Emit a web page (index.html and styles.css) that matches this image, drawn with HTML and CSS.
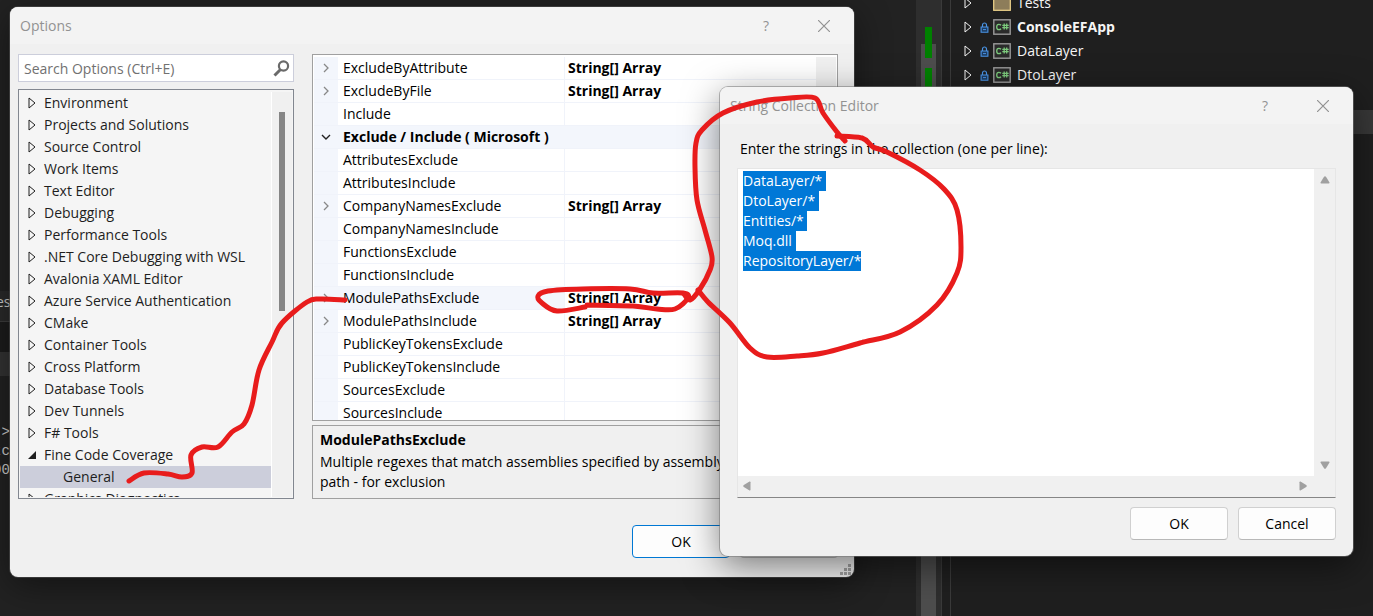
FILE: index.html
```html
<!DOCTYPE html>
<html lang="en">
<head>
<meta charset="utf-8">
<title>Options</title>
<link rel="stylesheet" href="styles.css">
</head>
<body>
<svg class="defs" aria-hidden="true">
  <symbol id="arrow" viewBox="0 0 8 12"><path d="M1 1v10l6-5z" fill="none" stroke="currentColor"/></symbol>
  <symbol id="arrow-open" viewBox="0 0 8 8"><path d="M8 0v8H0z" fill="currentColor"/></symbol>
  <symbol id="chev" viewBox="0 0 8 10"><path d="M2 1l4 4-4 4" fill="none" stroke="#888" stroke-width="1.3"/></symbol>
  <symbol id="chev-open" viewBox="0 0 10 8"><path d="M1 2l4 4 4-4" fill="none" stroke="#222" stroke-width="1.4"/></symbol>
  <symbol id="close" viewBox="0 0 12 12"><path d="M0 0l12 12M12 0L0 12" stroke="currentColor" stroke-width="1.2"/></symbol>
  <symbol id="lock" viewBox="0 0 8 11"><path d="M2 5V3a2 2 0 0 1 4 0v2" fill="none" stroke="#4a94e6" stroke-width="1.2"/><path d="M.6 5h6.800v5.200H.6z" fill="#1d3c60" stroke="#4a94e6" stroke-width="1.1"/><path d="M2.500 7.600h3" stroke="#4a94e6"/></symbol>
  <symbol id="csharp" viewBox="0 0 18 16"><rect x=".8" y=".8" width="16.4" height="14.4" fill="#2b2b2b" stroke="#9a9a9a" stroke-width="1.4"/><path d="M8 6.300C7.300 5.500 6.500 5.300 5.800 5.300 4.500 5.300 3.700 6.500 3.700 8s.8 2.700 2.100 2.700c.7 0 1.500-.2 2.200-1M11.200 4.500v6M13.700 4.500v6M9.300 6.300h6.400M9.300 8.700h6.400" fill="none" stroke="#7cc97c" stroke-width="1.3"/></symbol>
  <symbol id="folder" viewBox="0 0 18 16"><rect x=".7" y=".7" width="16.600" height="14.600" fill="#8d7d5a" stroke="#f0d58c" stroke-width="1.200"/></symbol>
  <symbol id="tri" viewBox="0 0 10 8"><path d="M4 .8Q5-.4 6 .8L9.500 6.500Q9.700 7.500 8.700 7.500H1.300Q.3 7.500.5 6.500z" fill="#a0a0a0"/></symbol>
</svg>

<div class="desktop">
  <div class="editor">
    <div class="tab">es</div>
    <div class="band"></div>
    <div class="band light"></div>
    <pre class="code">-&gt;
tc
00</pre>
  </div>
  <div class="overview"><div class="thumb"><i></i><i></i></div></div>
  <div class="splitter"></div>
  <div class="explorer">
    <ul class="projects">
      <li><svg class="tw"><use href="#arrow"/></svg><span class="lock"></span><svg class="proj"><use href="#folder"/></svg>Tests</li>
      <li class="bold"><svg class="tw"><use href="#arrow"/></svg><svg class="lock"><use href="#lock"/></svg><svg class="proj"><use href="#csharp"/></svg>ConsoleEFApp</li>
      <li><svg class="tw"><use href="#arrow"/></svg><svg class="lock"><use href="#lock"/></svg><svg class="proj"><use href="#csharp"/></svg>DataLayer</li>
      <li><svg class="tw"><use href="#arrow"/></svg><svg class="lock"><use href="#lock"/></svg><svg class="proj"><use href="#csharp"/></svg>DtoLayer</li>
    </ul>
    <div class="picked"></div>
  </div>
</div>

<section class="window options" aria-label="Options">
  <header class="titlebar"><h1>Options</h1><button class="tb" aria-label="Help">?</button><button class="tb" aria-label="Close"><svg><use href="#close"/></svg></button></header>
  <div class="body">
    <div class="columns">
      <div class="side">
        <label class="search"><input type="text" placeholder="Search Options (Ctrl+E)" aria-label="Search Options"><svg viewBox="0 0 17 17"><circle cx="10.500" cy="6" r="4.600" fill="none" stroke="#6a6a6a" stroke-width="2.200"/><path d="M7.500 9.500L1.500 15.500" stroke="#6a6a6a" stroke-width="3"/></svg></label>
        <div class="treebox">
          <ul class="tree">
            <li><svg><use href="#arrow"/></svg>Environment</li>
            <li><svg><use href="#arrow"/></svg>Projects and Solutions</li>
            <li><svg><use href="#arrow"/></svg>Source Control</li>
            <li><svg><use href="#arrow"/></svg>Work Items</li>
            <li><svg><use href="#arrow"/></svg>Text Editor</li>
            <li><svg><use href="#arrow"/></svg>Debugging</li>
            <li><svg><use href="#arrow"/></svg>Performance Tools</li>
            <li><svg><use href="#arrow"/></svg>.NET Core Debugging with WSL</li>
            <li><svg><use href="#arrow"/></svg>Avalonia XAML Editor</li>
            <li><svg><use href="#arrow"/></svg>Azure Service Authentication</li>
            <li><svg><use href="#arrow"/></svg>CMake</li>
            <li><svg><use href="#arrow"/></svg>Container Tools</li>
            <li><svg><use href="#arrow"/></svg>Cross Platform</li>
            <li><svg><use href="#arrow"/></svg>Database Tools</li>
            <li><svg><use href="#arrow"/></svg>Dev Tunnels</li>
            <li><svg><use href="#arrow"/></svg>F# Tools</li>
            <li><svg><use href="#arrow-open"/></svg>Fine Code Coverage</li>
            <li class="child">General</li>
            <li><svg><use href="#arrow"/></svg>Graphics Diagnostics</li>
          </ul>
          <div class="treebar"><div></div></div>
        </div>
      </div>
      <div class="main">
        <div class="gridbox">
          <table class="props">
            <colgroup><col class="c1"><col class="c2"><col></colgroup>
            <tbody>
            <tr><td><svg><use href="#chev"/></svg></td><th>ExcludeByAttribute</th><td>String[] Array</td></tr>
            <tr><td><svg><use href="#chev"/></svg></td><th>ExcludeByFile</th><td>String[] Array</td></tr>
            <tr><td></td><th>Include</th><td></td></tr>
            <tr class="group"><td><svg><use href="#chev-open"/></svg></td><th colspan="2">Exclude / Include ( Microsoft )</th></tr>
            <tr><td></td><th>AttributesExclude</th><td></td></tr>
            <tr><td></td><th>AttributesInclude</th><td></td></tr>
            <tr><td><svg><use href="#chev"/></svg></td><th>CompanyNamesExclude</th><td>String[] Array</td></tr>
            <tr><td></td><th>CompanyNamesInclude</th><td></td></tr>
            <tr><td></td><th>FunctionsExclude</th><td></td></tr>
            <tr><td></td><th>FunctionsInclude</th><td></td></tr>
            <tr class="current"><td><svg><use href="#chev"/></svg></td><th>ModulePathsExclude</th><td>String[] Array</td></tr>
            <tr><td><svg><use href="#chev"/></svg></td><th>ModulePathsInclude</th><td>String[] Array</td></tr>
            <tr><td></td><th>PublicKeyTokensExclude</th><td></td></tr>
            <tr><td></td><th>PublicKeyTokensInclude</th><td></td></tr>
            <tr><td></td><th>SourcesExclude</th><td></td></tr>
            <tr><td></td><th>SourcesInclude</th><td></td></tr>
            </tbody>
          </table>
          <div class="gridbar"></div>
        </div>
        <div class="help"><h2>ModulePathsExclude</h2><p>Multiple regexes that match assemblies specified by assembly<br>path - for exclusion</p></div>
      </div>
    </div>
    <footer class="actions"><button class="btn default">OK</button><button class="btn" aria-label="Cancel"></button></footer>
  </div>
  <svg class="grip" viewBox="0 0 12 12"><path d="M8 0h3v3H8zM4 4h3v3H4zM8 4h3v3H8zM0 8h3v3H0zM4 8h3v3H4zM8 8h3v3H8z" fill="#a3a3a3"/></svg>
</section>

<section class="window strings" aria-label="String Collection Editor">
  <header class="titlebar"><h1>String Collection Editor</h1><button class="tb" aria-label="Help">?</button><button class="tb" aria-label="Close"><svg><use href="#close"/></svg></button></header>
  <div class="body">
    <label class="prompt" for="items">Enter the strings in the collection (one per line):</label>
    <div class="textbox">
      <textarea id="items" spellcheck="false" wrap="off">DataLayer/*
DtoLayer/*
Entities/*
Moq.dll
RepositoryLayer/*</textarea>
      <div class="vbar"><svg><use href="#tri"/></svg><svg class="down"><use href="#tri"/></svg></div>
      <div class="hbar"><svg class="left"><use href="#tri"/></svg><svg class="right"><use href="#tri"/></svg></div>
    </div>
    <footer class="actions"><button class="btn">OK</button><button class="btn">Cancel</button></footer>
  </div>
</section>

<svg class="ink" viewBox="0 0 1373 616" preserveAspectRatio="none" aria-hidden="true">
  <path data-points="129,481 144,473 168,474 182,477 192,473 191,455 202,447 218,447 232,432 244,424 252,405 259,370 272,342 282,323 307,302 320,299 345,300"/>
  <path data-points="585,307 557,311 542,303 538,296 548,291 583,289 630,289 653,293 683,293 688,298 675,309 657,309 633,306 587,305"/>
  <path data-points="684,294 690,300 700,289 710,270 712,257 705,230 697,200 695,167 696,143 702,130 723,113 757,102 790,98 815,98 823,113 837,132 845,141"/>
  <path data-points="837,136 862,138 873,147 887,152 920,170 944,189 957,210 961,247 957,273 937,305 900,332 860,343 823,353 797,356 767,357 750,348 730,323 708,302 698,290"/>
</svg>
<script src="page.js"></script>
</body>
</html>
```
FILE: styles.css
```css
* { box-sizing: border-box; }
body, h1, h2, p, ul, pre { margin: 0; padding: 0; font-weight: 400; }
ul { list-style: none; }
body { height: 100vh; overflow: hidden; background: #1f1f1f; color: #111; font: 14px/20px "Open Sans", "Noto Sans", sans-serif; }
button, input, textarea { font: inherit; color: inherit; margin: 0; }
.defs { position: absolute; width: 0; height: 0; }

.desktop { display: flex; height: 100%; }
.editor { flex: 1; display: flex; flex-direction: column; padding-top: 291px; background: #222; color: #ccc; }
.tab { height: 31px; margin-left: -4px; padding-top: 1px; border-bottom: 1px solid #3d3d3d; background: #2a2a2a; }
.band { height: 30px; background: #1c1c1c; }
.band.light { height: 24px; background: #333; margin-bottom: 47px; }
.code { margin-left: -7px; font: 14px/19px "Liberation Mono", monospace; }
.overview { display: flex; flex-direction: column; width: 25px; padding: 44px 5px 0; background: #2e2e2e; }
.thumb { display: flex; flex-direction: column; flex: none; width: 15px; height: 100%; background: #4d4d4d; }
.thumb i { display: block; width: 7px; height: 31px; margin: 0 4px 10px; background: #008000; }
.thumb i:first-child { margin-top: -17px; }
.splitter { width: 10px; border: 1px solid #3a3a3a; border-width: 0 1px; }
.explorer { width: 422px; color: #f5f5f5; }
.projects { margin-top: -9px; }
.projects li { display: flex; align-items: center; height: 24px; padding-left: 13px; }
.projects .bold { font-weight: 700; }
.tw { width: 8px; height: 12px; margin-right: 7px; }
.lock { width: 11px; height: 11px; }
.proj { width: 18px; height: 16px; margin: 0 6px 0 3px; }
.picked { height: 24px; margin-top: 23px; background: #383838; }

.window { position: absolute; display: flex; flex-direction: column; border-radius: 8px; background: #f0f0f0; overflow: hidden; box-shadow: 0 0 0 1px #5558, 0 8px 36px rgba(0, 0, 0, .45); }
.options { inset: 7px 519px 39px 10px; }
.strings { inset: 87px 20px 60px 720px; box-shadow: 0 0 0 1px #7778, 0 10px 36px rgba(0, 0, 0, .5); }
.titlebar { display: flex; flex: none; align-items: center; height: 37px; padding: 0 1px 0 10px; background: #f3f3f3; color: #929292; }
.titlebar h1 { flex: 1; font-size: 14px; }
.tb { width: 58px; height: 37px; padding: 0; border: 0; background: none; display: grid; place-items: center; }
.tb svg { width: 12px; height: 12px; }
.body { flex: 1; min-height: 0; display: flex; flex-direction: column; }

.options .body { padding: 10px 16px 19px 8px; }
.columns { flex: 1; min-height: 0; display: flex; gap: 18px; }
.side { width: 276px; display: flex; flex-direction: column; gap: 7px; }
.search { display: flex; align-items: center; height: 28px; padding: 1px 3px 0 0; border: 1px solid #cccedb; background: #fff; }
.search input { flex: 1; min-width: 0; padding: 0 5px; border: 0; outline: 0; background: none; }
.search input::placeholder { color: #717171; opacity: 1; }
.search svg { width: 17px; height: 17px; }
.treebox { flex: 1; min-height: 0; display: flex; padding: 2px 1px 1px; border: 1px solid #828790; background: #f5f5f5; }
.tree { flex: 1; overflow: hidden; }
.tree li { display: flex; align-items: center; height: 22px; padding-left: 8px; white-space: nowrap; color: #1e1e1e; }
.tree svg { width: 8px; height: 12px; margin-right: 8px; }
.tree .child { padding-left: 43px; background: #cccedb; }
.treebar { width: 21px; padding: 20px 7px 0; border-left: 1px solid #fff; background: #f0f0f0; }
.treebar div { width: 6px; height: 199px; background: #868686; }
.main { flex: 1; min-width: 0; display: flex; flex-direction: column; gap: 4px; }
.gridbox { flex: 1; min-height: 0; display: flex; align-items: flex-start; overflow: hidden; padding: 2px 1px 0; border: 1px solid #a0a0a0; background: #fff; }
.props { flex: 1; table-layout: fixed; border-spacing: 0; color: #000; }
.props col.c1 { width: 24px; }
.props col.c2 { width: 226px; }
.props td, .props th { height: 23px; padding: 0 0 0 5px; border-bottom: 1px solid #f0f3fa; text-align: left; font-weight: 400; line-height: 20px; white-space: nowrap; }
.props th + td { padding-left: 3px; border-left: 1px solid #f0f3fa; font-weight: 700; }
.props td:first-child { padding: 0; background: #f3f6fc; text-align: center; line-height: 0; }
.props svg { width: 10px; height: 10px; }
.props .group, .props .current th { background: #f3f6fc; }
.props .group th { font-weight: 700; }
.gridbar { width: 20px; align-self: stretch; background: #f0f0f0; }
.help { height: 74px; padding: 4px 7px; border: 1px solid #a0a0a0; color: #000; overflow: hidden; white-space: nowrap; }
.help h2 { font-size: 14px; font-weight: 700; margin-bottom: 2px; }
.actions { display: flex; justify-content: flex-end; gap: 10px; }
.options .actions { margin-top: 26px; }
.btn { width: 98px; height: 33px; padding: 0; border: 1px solid #d0d0d0; border-bottom-color: #b8b8b8; border-radius: 4px; background: #fdfdfd; color: #000; }
.btn.default { border-color: #0078d4; }
.grip { position: absolute; right: 2px; bottom: 1px; width: 12px; height: 12px; }

.strings .body { padding: 14px 17px 16px; }
.prompt { padding: 0 3px; margin-bottom: 8px; color: #000; line-height: 22px; }
.textbox { flex: 1; min-height: 0; display: grid; grid-template: 1fr 21px / 1fr 21px; border: 1px solid #e6e6e6; border-bottom-color: #868686; background: #f0f0f0; }
.textbox textarea { width: 100%; height: 100%; padding: 2px 5px; border: 0; outline: 0; resize: none; overflow: hidden; background: #fff; color: #000; line-height: 20px; }
textarea::selection { background: #0078d7; color: #fff; }
.vbar { display: flex; flex-direction: column; justify-content: space-between; align-items: center; padding: 7px 0; }
.hbar { display: flex; justify-content: space-between; align-items: center; padding: 0 6px 2px 4px; }
.vbar svg, .hbar svg { width: 10px; height: 8px; }
.down { transform: rotate(180deg); }
.left { transform: rotate(-90deg); }
.right { transform: rotate(90deg); }
.strings .actions { margin-top: 9px; }

.ink { position: absolute; inset: 0; width: 100%; height: 100%; pointer-events: none; }
.ink path { fill: none; stroke: #e81c1c; stroke-width: 5; stroke-linecap: round; stroke-linejoin: round; }
```
FILE: page.js
```js
// Turns each list of pen points into a smooth curve.
document.querySelectorAll('.ink path').forEach(function (path) {
  var p = path.dataset.points.split(' ').map(function (s) { return s.split(',').map(Number); });
  var d = 'M' + p[0];
  for (var i = 0; i < p.length - 1; i++) {
    var a = p[Math.max(i - 1, 0)], b = p[i], c = p[i + 1], e = p[Math.min(i + 2, p.length - 1)];
    d += 'C' + [b[0] + (c[0] - a[0]) / 6, b[1] + (c[1] - a[1]) / 6, c[0] - (e[0] - b[0]) / 6, c[1] - (e[1] - b[1]) / 6, c[0], c[1]];
  }
  path.setAttribute('d', d);
});
var items = document.getElementById('items');
items.focus();
items.select();
```
